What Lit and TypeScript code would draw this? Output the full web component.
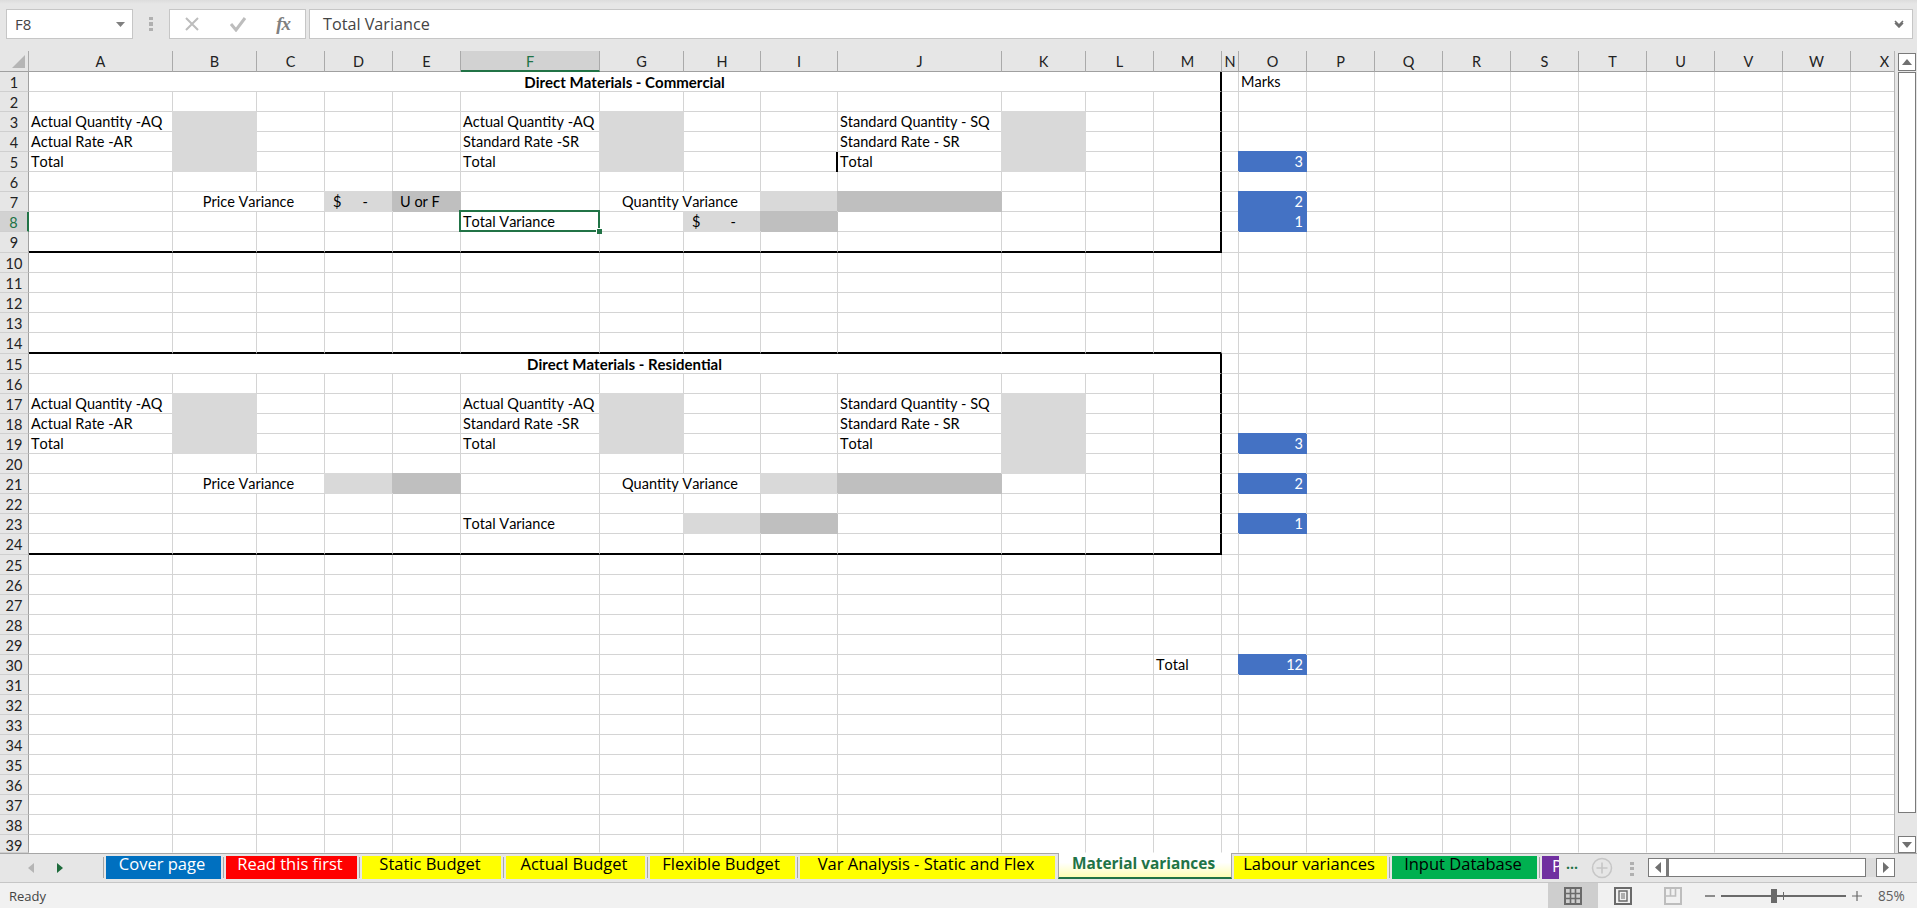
import { LitElement, css, html, svg } from 'lit';
import { customElement } from 'lit/decorators.js';
import { classMap } from 'lit/directives/class-map.js';
import { styleMap } from 'lit/directives/style-map.js';

type Cell = { t?: string; cls?: string; span?: number; dollar?: boolean };

const COLS = 'ABCDEFGHIJKLMNOPQRSTUVWX'.split('');
const ROWS = Array.from({ length: 39 }, (_, i) => i + 1);

const TABS = [
  { name: 'Cover page', w: 115, cls: 'blue' },
  { name: 'Read this first', w: 131, cls: 'red' },
  { name: 'Static Budget', w: 139, cls: 'yellow' },
  { name: 'Actual Budget', w: 139, cls: 'yellow' },
  { name: 'Flexible Budget', w: 145, cls: 'yellow' },
  { name: 'Var Analysis - Static and Flex', w: 255, cls: 'yellow' },
  { name: 'Material variances', w: 174, cls: 'active' },
  { name: 'Labour variances', w: 153, cls: 'yellow' },
  { name: 'Input Database', w: 145, cls: 'green' },
  { name: 'P', w: 17, cls: 'purple' },
];

function buildCells() {
  const c: Record<string, Cell> = {};
  const block = (r: number, title: string) => {
    c[`A${r}`] = { t: title, cls: 'title', span: 13 };
    c[`A${r + 2}`] = { t: 'Actual Quantity -AQ' };
    c[`A${r + 3}`] = { t: 'Actual Rate -AR' };
    c[`A${r + 4}`] = { t: 'Total' };
    c[`F${r + 2}`] = { t: 'Actual Quantity -AQ' };
    c[`F${r + 3}`] = { t: 'Standard Rate -SR' };
    c[`F${r + 4}`] = { t: 'Total' };
    c[`J${r + 2}`] = { t: 'Standard Quantity - SQ' };
    c[`J${r + 3}`] = { t: 'Standard Rate - SR' };
    c[`J${r + 4}`] = { t: 'Total' };
    for (const col of ['B', 'G', 'K']) {
      for (const i of [2, 3, 4]) c[`${col}${r + i}`] = { cls: 'light' };
    }
    c[`B${r + 6}`] = { t: 'Price Variance', cls: 'center', span: 2 };
    c[`D${r + 6}`] = { cls: 'light' };
    c[`E${r + 6}`] = { cls: 'dark' };
    c[`G${r + 6}`] = { t: 'Quantity Variance', cls: 'center', span: 2 };
    c[`I${r + 6}`] = { cls: 'light' };
    c[`J${r + 6}`] = { cls: 'dark' };
    c[`O${r + 4}`] = { t: '3', cls: 'mark' };
    c[`O${r + 6}`] = { t: '2', cls: 'mark' };
  };
  block(1, 'Direct Materials - Commercial');
  block(15, 'Direct Materials - Residential');

  c.O1 = { t: 'Marks' };
  c.J5 = { t: 'Total', cls: 'cursor' };
  c.D7 = { cls: 'light', dollar: true };
  c.E7 = { t: 'U or F', cls: 'dark indent' };
  c.F8 = { t: 'Total Variance', cls: 'sel' };
  c.H8 = { cls: 'light', dollar: true };
  c.I8 = { cls: 'dark' };
  c.O8 = { t: '1', cls: 'mark' };
  c.K20 = { cls: 'light' };
  c.F23 = { t: 'Total Variance' };
  c.H23 = { cls: 'light' };
  c.I23 = { cls: 'dark' };
  c.O23 = { t: '1', cls: 'mark' };
  c.M30 = { t: 'Total' };
  c.O30 = { t: '12', cls: 'mark' };
  return c;
}

const CELLS = buildCells();
const inBox = (r: number) => (r >= 1 && r <= 9) || (r >= 15 && r <= 24);
const boxEnd = (r: number) => r === 9 || r === 14 || r === 24;

const gridIcon = svg`<path d="M1 1h16v16H1z" fill="none" stroke="#6a6a6a" stroke-width="2"/><path d="M6.5 1v16M11.5 1v16M1 6.5h16M1 11.5h16" stroke="#6a6a6a" stroke-width="1.6"/>`;
const pageIcon = svg`<path d="M1 1h16v16H1z" fill="none" stroke="#6a6a6a" stroke-width="2"/><path d="M5 4h8v10H5z" fill="none" stroke="#6a6a6a" stroke-width="1.4"/><path d="M7 7h4M7 9h4M7 11h4" stroke="#6a6a6a"/>`;
const breakIcon = svg`<path d="M1 1h16v16H1z" fill="none" stroke="#bdbdbd" stroke-width="2"/><path d="M6.5 1v8h5V1M1 9h5" fill="none" stroke="#bdbdbd" stroke-width="1.6"/>`;

@customElement('app-root')
export class AppRoot extends LitElement {
  static override styles = css`
    :host {
      display: block;
      width: 1917px;
      height: 908px;
      overflow: hidden;
      background: #e6e6e6;
    }
    .app {
      display: flex;
      flex-direction: column;
      height: 908px;
    }

    /* formula bar */
    .fbar {
      box-sizing: border-box;
      height: 51px;
      display: flex;
      padding: 9px 4px 0 6px;
      background: linear-gradient(#dcdcdc, #e6e6e6 4px);
      font: 16.2px 'Open Sans', sans-serif;
      color: #444;
    }
    .box {
      box-sizing: border-box;
      height: 30px;
      background: #fff;
      border: 1px solid #c6c6c6;
      display: flex;
      align-items: center;
    }
    .name {
      width: 127px;
      padding: 0 7px 0 8px;
      justify-content: space-between;
      font-size: 15px;
    }
    .vdots {
      width: 4px;
      height: 14px;
      margin: 8px 16px 0 16px;
      background: repeating-linear-gradient(#b0b0b0 0 3px, transparent 3px 5.5px);
    }
    .fx {
      width: 137px;
      margin-right: 3px;
      padding: 0 14px 0 14px;
      justify-content: space-between;
    }
    .fx-label {
      font: italic 700 19px 'Liberation Serif', serif;
      color: #808080;
      letter-spacing: -1px;
      margin-right: 1px;
    }
    .input {
      flex: 1;
      padding: 0 8px 0 13px;
      justify-content: space-between;
    }

    /* sheet */
    .main {
      display: flex;
      height: 802px;
    }
    .sheet {
      box-sizing: border-box;
      width: 1895px;
      overflow: hidden;
      border-right: 1px solid #b5b5b5;
    }
    .grid {
      display: grid;
      grid-template-columns: 29px 144px 84px 68px 68px 68px 139px 84px 77px 77px 164px 84px 68px 68px 17px repeat(10, 68px);
      grid-template-rows:
        21px repeat(8, 20px) 21px repeat(4, 20px) 21px repeat(9, 20px) 21px
        repeat(14, 20px) 18px;
      width: max-content;
      background: #fff;
      font: 14.5px Lato, sans-serif;
      font-kerning: none;
      color: #000;
    }
    .cell {
      box-sizing: border-box;
      position: relative;
      min-width: 0;
      padding: 1px 2px 0;
      line-height: 18px;
      white-space: nowrap;
      border-right: 1px solid #d4d4d4;
      border-bottom: 1px solid #d4d4d4;
    }
    .cell.noline {
      border-bottom-color: transparent;
    }
    .ch,
    .rh {
      box-sizing: border-box;
      background: #e6e6e6;
      color: #222;
      text-align: center;
      line-height: 19px;
    }
    .ch {
      padding-top: 1px;
      border-right: 1px solid #aaa;
      border-bottom: 1px solid #a0a0a0;
    }
    .ch.hot {
      background: #d2d2d2;
      color: #217346;
      border-bottom: 2px solid #217346;
    }
    .corner {
      display: flex;
      align-items: flex-end;
      justify-content: flex-end;
      padding: 0 3px 3px 0;
    }
    .rh {
      border-right: 1px solid #a0a0a0;
      border-bottom: 1px solid #cfcfcf;
      padding-top: 1px;
    }
    .rh.hot {
      background: #d2d2d2;
      color: #217346;
      border-right: 2px solid #217346;
    }
    .title {
      font-weight: 700;
      font-size: 15px;
      text-align: center;
    }
    .center {
      text-align: center;
    }
    .indent {
      padding-left: 7px;
    }
    .light,
    .dark,
    .mark {
      border-color: transparent;
    }
    .light {
      background: #d9d9d9;
      box-shadow: -1px -1px 0 #d9d9d9;
    }
    .dark {
      background: #bfbfbf;
      box-shadow: -1px -1px 0 #bfbfbf;
    }
    .mark {
      background: #4472c4;
      box-shadow: -1px -1px 0 #4472c4;
      color: #fff;
      text-align: right;
      padding-right: 3px;
    }
    .cell.thick-r {
      border-right: 2px solid #000;
    }
    .cell.thick-b {
      border-bottom: 2px solid #000;
    }
    .cursor {
      box-shadow: -2px 0 0 #000;
    }
    .dollar {
      display: flex;
      justify-content: space-between;
      padding: 1px 24px 0 8px;
    }
    .sel::before {
      content: '';
      position: absolute;
      z-index: 2;
      inset: -2px -1px -1px -2px;
      border: 2px solid #217346;
    }
    .sel::after {
      content: '';
      position: absolute;
      z-index: 3;
      right: -3px;
      bottom: -3px;
      width: 5px;
      height: 5px;
      background: #217346;
      border: 1px solid #fff;
      border-width: 1px 0 0 1px;
    }

    /* vertical scrollbar */
    .vscroll {
      width: 22px;
      box-sizing: border-box;
      display: flex;
      flex-direction: column;
      padding: 2px 1px 0 3px;
    }
    .vbtn,
    .vthumb,
    .hbtn,
    .hthumb {
      box-sizing: border-box;
      background: #fff;
      border: 1px solid #7a7a7a;
      display: flex;
      align-items: center;
      justify-content: center;
    }
    .vbtn {
      height: 18px;
    }
    .vthumb {
      height: 741px;
      margin-top: 1px;
    }
    .vbtn.down {
      height: 17px;
      margin-top: 23px;
    }

    /* sheet tabs */
    .strip {
      box-sizing: border-box;
      height: 30px;
      display: flex;
      border-top: 1px solid #a6a6a6;
      border-bottom: 1px solid #c6c6c6;
      font: 16.5px 'Open Sans', sans-serif;
    }
    .nav {
      box-sizing: border-box;
      width: 101px;
      height: 26px;
      display: flex;
      align-items: center;
      padding: 2px 0 0 28px;
      gap: 23px;
    }
    .tabsep {
      width: 1px;
      height: 21px;
      margin: 3px 2px 0;
      background: #a6a6a6;
      flex: none;
    }
    .tab {
      box-sizing: border-box;
      flex: none;
      height: 23px;
      margin-top: 2px;
      padding-right: 3px;
      white-space: nowrap;
      text-align: center;
      line-height: 16px;
    }
    .tab.blue {
      background: #0070c0;
      color: #fff;
    }
    .tab.red {
      background: #ff0000;
      color: #fff;
    }
    .tab.yellow {
      background: #ffff00;
      color: #000;
    }
    .tab.green {
      background: #00b050;
      color: #000;
    }
    .tab.purple {
      background: #7030a0;
      color: #fff;
      overflow: hidden;
      text-align: left;
      padding: 0 0 0 10px;
      line-height: 20px;
    }
    .tab.active {
      height: 26px;
      margin: -1px 2px 0 3px;
      padding: 3px 3px 0 0;
      background: linear-gradient(#fff 40%, #ffffb4);
      color: #217346;
      font-weight: 700;
      font-size: 15.4px;
      border-left: 1px solid #a6a6a6;
      border-right: 1px solid #a6a6a6;
      border-bottom: 2px solid #217346;
    }
    .more {
      color: #217346;
      margin: 2px 0 0 7px;
      width: 14px;
      line-height: 16px;
      font-weight: 700;
      font-size: 14px;
    }
    .plus {
      margin: 3px 0 0 11px;
    }
    .hdots {
      width: 4px;
      height: 14px;
      margin: 8px 0 0 17px;
      background: repeating-linear-gradient(#b0b0b0 0 3px, transparent 3px 5.5px);
    }
    .hscroll {
      margin: 4px 22px 0 auto;
      display: flex;
      width: 247px;
      height: 19px;
      background: #dcdcdc;
    }
    .hbtn {
      width: 19px;
    }
    .hthumb {
      width: 199px;
      border-left-width: 2px;
    }
    .hscroll .hbtn.r {
      margin-left: 10px;
    }

    /* status bar */
    .status {
      flex: 1;
      display: flex;
      align-items: center;
      background: #f1f1f1;
      padding-left: 9px;
      font: 13px 'Open Sans', sans-serif;
      color: #444;
    }
    .views {
      margin-left: auto;
      display: flex;
      height: 100%;
    }
    .view {
      width: 50px;
      display: flex;
      align-items: center;
      justify-content: center;
    }
    .view.on {
      background: #cecece;
    }
    .zoom {
      display: flex;
      align-items: center;
      margin-left: 7px;
      color: #5f5f5f;
      font-size: 13.6px;
    }
    .slider {
      position: relative;
      width: 125px;
      height: 2px;
      margin: 0 6px;
      background: #6a6a6a;
    }
    .knob {
      position: absolute;
      left: 50px;
      top: -6px;
      width: 6px;
      height: 14px;
      background: #6a6a6a;
    }
    .tick {
      position: absolute;
      left: 62px;
      top: -3px;
      width: 1px;
      height: 8px;
      background: #6a6a6a;
    }
    .pct {
      width: 39px;
      margin-left: 16px;
    }
  `;

  private renderCell(col: string, r: number) {
    const spec = CELLS[`${col}${r}`] ?? {};
    const extra = spec.cls ?? '';
    const classes: Record<string, boolean> = {
      cell: true,
      noline: r === 39,
      dollar: !!spec.dollar,
      // the two outlined blocks stop at the right edge of column M
      'thick-r': col === 'M' && inBox(r),
      'thick-b': boxEnd(r) && COLS.indexOf(col) <= 12,
    };
    if (extra) for (const k of extra.split(' ')) classes[k] = true;
    if (spec.span === 13) classes['thick-r'] = true;
    const span = spec.span ? { gridColumn: `span ${spec.span}` } : {};
    return html`<div class=${classMap(classes)} style=${styleMap(span)}>
      ${spec.dollar ? html`<span>$</span><span>-</span>` : spec.t ?? ''}
    </div>`;
  }

  private renderRow(r: number) {
    const out = [];
    for (let i = 0; i < COLS.length; i++) {
      const col = COLS[i];
      out.push(this.renderCell(col, r));
      i += (CELLS[`${col}${r}`]?.span ?? 1) - 1;
    }
    return out;
  }

  private tri(points: string, fill: string, w = 10, h = 10) {
    return html`<svg width=${w} height=${h} viewBox="0 0 10 10" preserveAspectRatio="none"><polygon points=${points} fill=${fill}></polygon></svg>`;
  }

  override render() {
    return html`
      <div class="app">
        <div class="fbar">
          <div class="box name"><span>F8</span>${this.tri('0,0 10,0 5,10', '#808080', 9, 5)}</div>
          <div class="vdots"></div>
          <div class="box fx">
            <svg width="16" height="16" viewBox="0 0 16 16"><path d="M2 2l12 12M14 2L2 14" stroke="#bdbdbd" stroke-width="2"></path></svg>
            <svg width="18" height="16" viewBox="0 0 18 16"><path d="M2 8l5 6L16 2" fill="none" stroke="#bdbdbd" stroke-width="3"></path></svg>
            <span class="fx-label">fx</span>
          </div>
          <div class="box input">
            <span>Total Variance</span>
            <svg width="10" height="8" viewBox="0 0 10 8"><path d="M1 1l4 4 4-4M1 3l4 4 4-4" fill="none" stroke="#707070" stroke-width="1.6"></path></svg>
          </div>
        </div>

        <div class="main">
          <div class="sheet">
            <div class="grid">
              <div class="ch corner">
                <svg width="13" height="13" viewBox="0 0 13 13"><polygon points="13,0 13,13 0,13" fill="#b5b5b5"></polygon></svg>
              </div>
              ${COLS.map((c) => html`<div class="ch ${c === 'F' ? 'hot' : ''}">${c}</div>`)}
              ${ROWS.map(
                (r) => html`
                  <div class="rh ${r === 8 ? 'hot' : ''}">${r}</div>
                  ${this.renderRow(r)}
                `,
              )}
            </div>
          </div>
          <div class="vscroll">
            <div class="vbtn">${this.tri('5,0 10,10 0,10', '#707070', 10, 6)}</div>
            <div class="vthumb"></div>
            <div class="vbtn down">${this.tri('0,0 10,0 5,10', '#707070', 10, 6)}</div>
          </div>
        </div>

        <div class="strip">
          <div class="nav">
            ${this.tri('10,0 10,10 0,5', '#b5b5b5', 6, 10)}
            ${this.tri('0,0 0,10 10,5', '#1e6b3c', 6, 10)}
          </div>
          <div class="tabsep"></div>
          ${TABS.map((t, i) => {
            const prevActive = i > 0 && TABS[i - 1].cls === 'active';
            const sep = i < TABS.length - 1 && t.cls !== 'active' && TABS[i + 1].cls !== 'active' && !prevActive;
            return html`
              <div class="tab ${t.cls}" style=${styleMap({ width: `${t.w}px` })}>${t.name}</div>
              ${sep || prevActive ? html`<div class="tabsep"></div>` : ''}
            `;
          })}
          <div class="more">...</div>
          <svg class="plus" width="22" height="22" viewBox="0 0 22 22">
            <circle cx="11" cy="11" r="9.5" fill="none" stroke="#c6c6c6" stroke-width="1.5"></circle>
            <path d="M11 5.5v11M5.5 11h11" stroke="#c6c6c6" stroke-width="1.6"></path>
          </svg>
          <div class="hdots"></div>
          <div class="hscroll">
            <div class="hbtn">${this.tri('10,0 10,10 0,5', '#707070', 6, 11)}</div>
            <div class="hthumb"></div>
            <div class="hbtn r">${this.tri('0,0 0,10 10,5', '#707070', 6, 11)}</div>
          </div>
        </div>

        <div class="status">
          <span>Ready</span>
          <div class="views">
            <div class="view on"><svg width="18" height="18" viewBox="0 0 18 18">${gridIcon}</svg></div>
            <div class="view"><svg width="18" height="18" viewBox="0 0 18 18">${pageIcon}</svg></div>
            <div class="view"><svg width="18" height="18" viewBox="0 0 18 18">${breakIcon}</svg></div>
          </div>
          <div class="zoom">
            <svg width="10" height="10" viewBox="0 0 10 10"><path d="M0 5h10" stroke="#6a6a6a" stroke-width="1.5"></path></svg>
            <div class="slider"><div class="knob"></div><div class="tick"></div></div>
            <svg width="10" height="10" viewBox="0 0 10 10"><path d="M0 5h10M5 0v10" stroke="#6a6a6a" stroke-width="1.2"></path></svg>
            <div class="pct">85%</div>
          </div>
        </div>
      </div>
    `;
  }
}
